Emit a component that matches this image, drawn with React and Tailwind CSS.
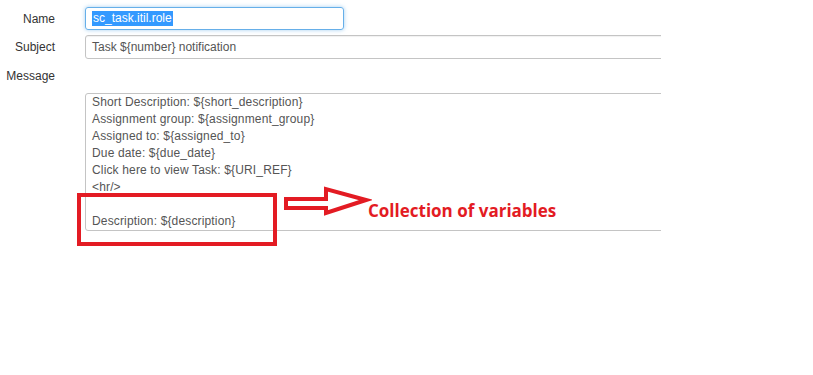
import React from 'react';

const lines = [
  'Short Description: ${short_description}',
  'Assignment group: ${assignment_group}',
  'Assigned to: ${assigned_to}',
  'Due date: ${due_date}',
  'Click here to view Task: ${URI_REF}',
  '<hr/>',
  '',
  'Description: ${description}',
];

export default function App() {
  return (
    <div className="relative w-[813px] h-[375px] bg-white overflow-hidden font-['Liberation_Sans',Arial,sans-serif] text-[12px] text-[#333]">
      {/* form, clipped on the right */}
      <div className="w-[661px] overflow-hidden pt-[7px]">
        <div className="flex items-center h-[23px]">
          <label className="w-[55px] text-right shrink-0">Name</label>
          <div className="ml-[30px] w-[259px] h-[23px] shrink-0 rounded-[3px] border border-[#66afe9] shadow-[0_0_4px_rgba(102,175,233,0.6)] flex items-center px-[6px] text-[#555]">
            <span className="bg-[#3399ff] text-white leading-[15px] px-px">sc_task.itil.role</span>
          </div>
        </div>

        <div className="flex items-center h-[24px] mt-[5px]">
          <label className="w-[55px] text-right shrink-0">Subject</label>
          <div className="ml-[30px] w-[700px] h-[24px] shrink-0 rounded-[3px] border border-[#c4c4c4] shadow-[inset_0_1px_1px_rgba(0,0,0,0.06)] flex items-center px-[6px] text-[#555]">
            Task {'${number}'} notification
          </div>
        </div>

        <div className="flex items-center h-[18px] mt-[8px]">
          <label className="w-[55px] text-right shrink-0">Message</label>
        </div>

        <div className="ml-[85px] mt-[8px] w-[700px] h-[138px] rounded-[3px] border border-[#c4c4c4] px-[6px] text-[#555] leading-[17px] tracking-[0.15px]">
          {lines.map((l, i) => (
            <div key={i} className="h-[17px]">{l}</div>
          ))}
        </div>
      </div>

      {/* annotation overlay */}
      <div className="absolute left-[77px] top-[193px] w-[200px] h-[53px] border-[4px] border-[#e31b23]" />
      <svg className="absolute left-[280px] top-[185px]" width="92" height="34" viewBox="0 0 92 34">
        <path d="M6 14 L46 14 L46 4 L86 15 L46 28 L46 23 L6 23 Z" fill="none" stroke="#e31b23" strokeWidth="4" strokeLinejoin="miter" />
      </svg>
      <div className="absolute left-[368px] top-[199px] font-['Open_Sans',sans-serif] font-bold text-[17px] leading-[23px] text-[#e31b23]">
        Collection of variables
      </div>
    </div>
  );
}
